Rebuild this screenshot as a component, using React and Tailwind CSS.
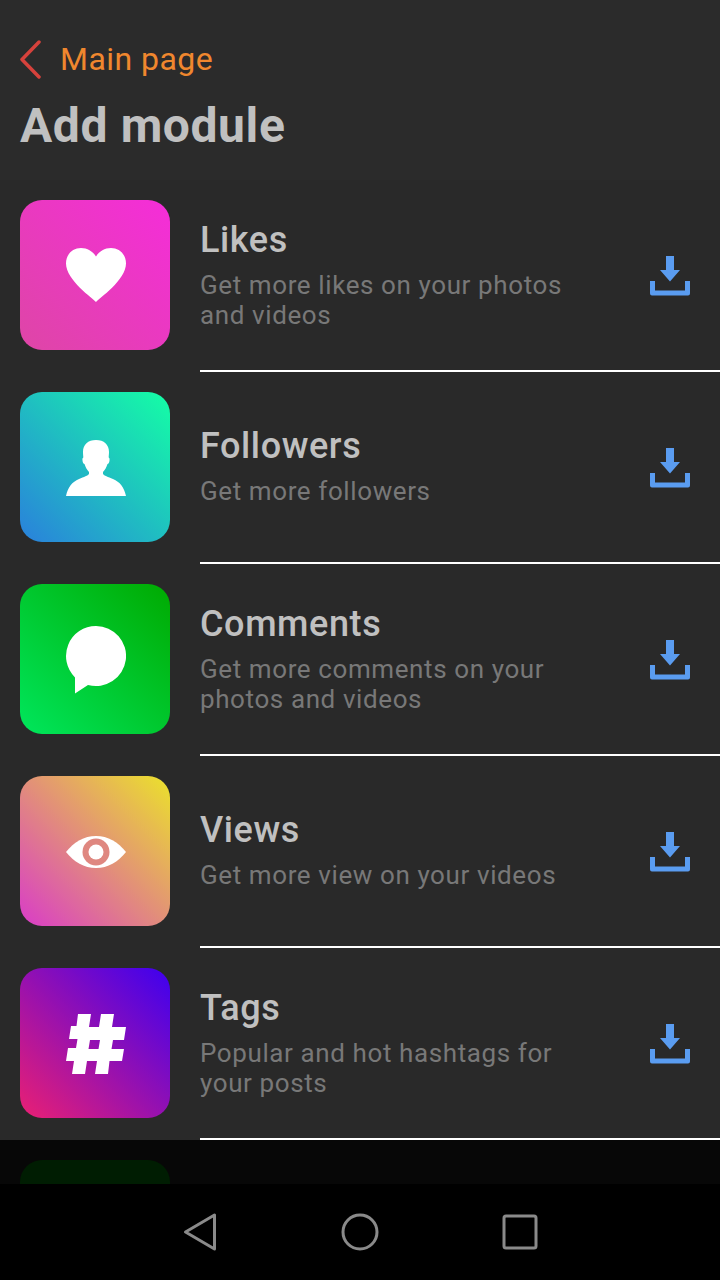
const Dl = () => (
  <svg width="40" height="40" viewBox="0 0 40 40" className="shrink-0 mt-[2px] text-[#5a9cf0]" fill="currentColor">
    <path d="M16 0h8v14h6L20 25.500 10 14h6z" />
    <path d="M0 25h5v9.500h30V25h5v12.500a2 2 0 0 1-2 2H2a2 2 0 0 1-2-2z" />
  </svg>
);

const Heart = () => (
  <svg width="60" height="54" viewBox="0 0 60 54" fill="#fff">
    <path d="M30 54C27 50.500 0 32 0 15.500 0 6 7 0 15 0c6.500 0 12 3.500 15 8.500C33 3.500 38.500 0 45 0c8 0 15 6 15 15.500C60 32 33 50.500 30 54z" />
  </svg>
);
const Person = () => (
  <svg width="60" height="56" viewBox="0 0 60 56" fill="#fff" className="mt-[2px]">
    <path d="M30 0c8 0 13 4.500 13 12 0 2-.3 4-.3 5.500.8.300 1 1.500.8 3-.2 2-1 3.500-2 3.500-1 3-2.500 6-4.500 8v2c1 1.500 5 3 10 5 7 3 11 8 13 17H0c2-9 6-14 13-17 5-2 9-3.500 10-5v-2c-2-2-3.500-5-4.500-8-1 0-1.800-1.500-2-3.500-.2-1.500 0-2.700.8-3C17.300 16 17 14 17 12 17 4.500 22 0 30 0z" />
  </svg>
);
const Bubble = () => (
  <svg width="60" height="68" viewBox="0 0 60 68" fill="#fff" className="mt-[2px]">
    <path d="M30 0A30 30 0 1 1 22 58.900L9 67.500V51.400A30 30 0 0 1 30 0z" />
  </svg>
);
const Eye = ({ c }) => (
  <svg width="60" height="32" viewBox="0 0 60 32" className="mt-[2px]">
    <path fill="#fff" d="M0 16C8 6 18 0 30 0s22 6 30 16c-8 10-18 16-30 16S8 26 0 16z" />
    <circle cx="30" cy="16" r="13.500" fill={c} />
    <circle cx="30" cy="16" r="7.500" fill="#fff" />
  </svg>
);
const Hash = () => (
  <svg width="60" height="60" viewBox="0 0 60 60" fill="#fff" className="mt-[2px]">
    <path fillRule="evenodd" d="M12 0h13l-2 13h10l2-13h13l-2 13h14l-2 13H47l-1.500 9H58l-2 12H43.500L42 60H29l2-13H21l-2 13H6l2-13H0l2-13h8l1.500-9H3l2-13h5.500zM24 26h10l-1.500 9h-10z" />
  </svg>
);

const rows = [
  { t: "Likes", d: ["Get more likes on your photos", "and videos"], g: "bg-[linear-gradient(to_top_right,#de46a6,#f52dd9)]", i: <Heart /> },
  { t: "Followers", d: ["Get more followers"], g: "bg-[linear-gradient(to_top_right,#2a80dc,#14ffa5)]", i: <Person /> },
  { t: "Comments", d: ["Get more comments on your", "photos and videos"], g: "bg-[linear-gradient(to_top_right,#00e65c,#00aa00)]", i: <Bubble /> },
  { t: "Views", d: ["Get more view on your videos"], g: "bg-[linear-gradient(to_top_right,#d93cc8,#ebe22b)]", i: <Eye c="#df8780" /> },
  { t: "Tags", d: ["Popular and hot hashtags for", "your posts"], g: "bg-[linear-gradient(to_top_right,#ea2073,#3d00f0)]", i: <Hash /> },
];

export default function App() {
  return (
    <div className="w-[720px] h-[1280px] bg-black flex flex-col overflow-hidden font-['Roboto',sans-serif]">
      <header className="h-[180px] bg-[#2b2b2b] px-5 pt-10 shrink-0">
        <div className="flex items-center h-[38px]">
          <svg width="21" height="39" viewBox="0 0 21 39" fill="none" stroke="#d6423c" strokeWidth="3.500" strokeLinecap="round" strokeLinejoin="round">
            <path d="M19 2 2 19.500 19 37" />
          </svg>
          <span className="ml-[19px] text-[32px] leading-[38px] tracking-[0.45px] text-[#f0872e]">Main page</span>
        </div>
        <h1 className="mt-[21px] text-[48px] leading-[54px] font-bold tracking-[0.6px] text-[#c0c0c0]">Add module</h1>
      </header>
      <main className="bg-[#292929] shrink-0">
        {rows.map((r) => (
          <div key={r.t} className="flex h-[192px]">
            <div className={`ml-5 mt-5 pl-[2px] w-[150px] h-[150px] rounded-[22px] shrink-0 flex items-center justify-center ${r.g}`}>{r.i}</div>
            <div className="ml-[30px] flex-1 flex items-center justify-between border-b-2 border-white pr-[30px]">
              <div className={r.d.length > 1 ? "pt-[1px]" : "pb-[1px]"}>
                <div className="text-[36px] leading-[38px] font-medium tracking-[0.6px] text-[#c0c0c0]">{r.t}</div>
                <div className="mt-[11px] text-[26px] leading-[30px] tracking-[0.6px] text-[#787878]">
                  {r.d.map((l) => <div key={l}>{l}</div>)}
                </div>
              </div>
              <Dl />
            </div>
          </div>
        ))}
      </main>
      <div className="h-[44px] bg-[#070707] shrink-0 pt-5 pl-5 overflow-hidden">
        <div className="w-[150px] h-[150px] rounded-[22px] bg-[#001d02]"></div>
      </div>
      <nav className="flex-1 bg-black flex justify-center items-center">
        <div className="w-40 flex justify-center">
          <svg width="36" height="40" viewBox="0 0 36 40" fill="none" stroke="#8a8a8a" strokeWidth="3" strokeLinejoin="round">
            <path d="M32.500 3v34L3.500 20z" />
          </svg>
        </div>
        <div className="w-40 flex justify-center">
          <svg width="40" height="40" viewBox="0 0 40 40" fill="none" stroke="#8a8a8a" strokeWidth="3"><circle cx="20" cy="20" r="17" /></svg>
        </div>
        <div className="w-40 flex justify-center">
          <svg width="36" height="36" viewBox="0 0 36 36" fill="none" stroke="#8a8a8a" strokeWidth="3"><rect x="2" y="2" width="32" height="32" rx="2" /></svg>
        </div>
      </nav>
    </div>
  );
}
